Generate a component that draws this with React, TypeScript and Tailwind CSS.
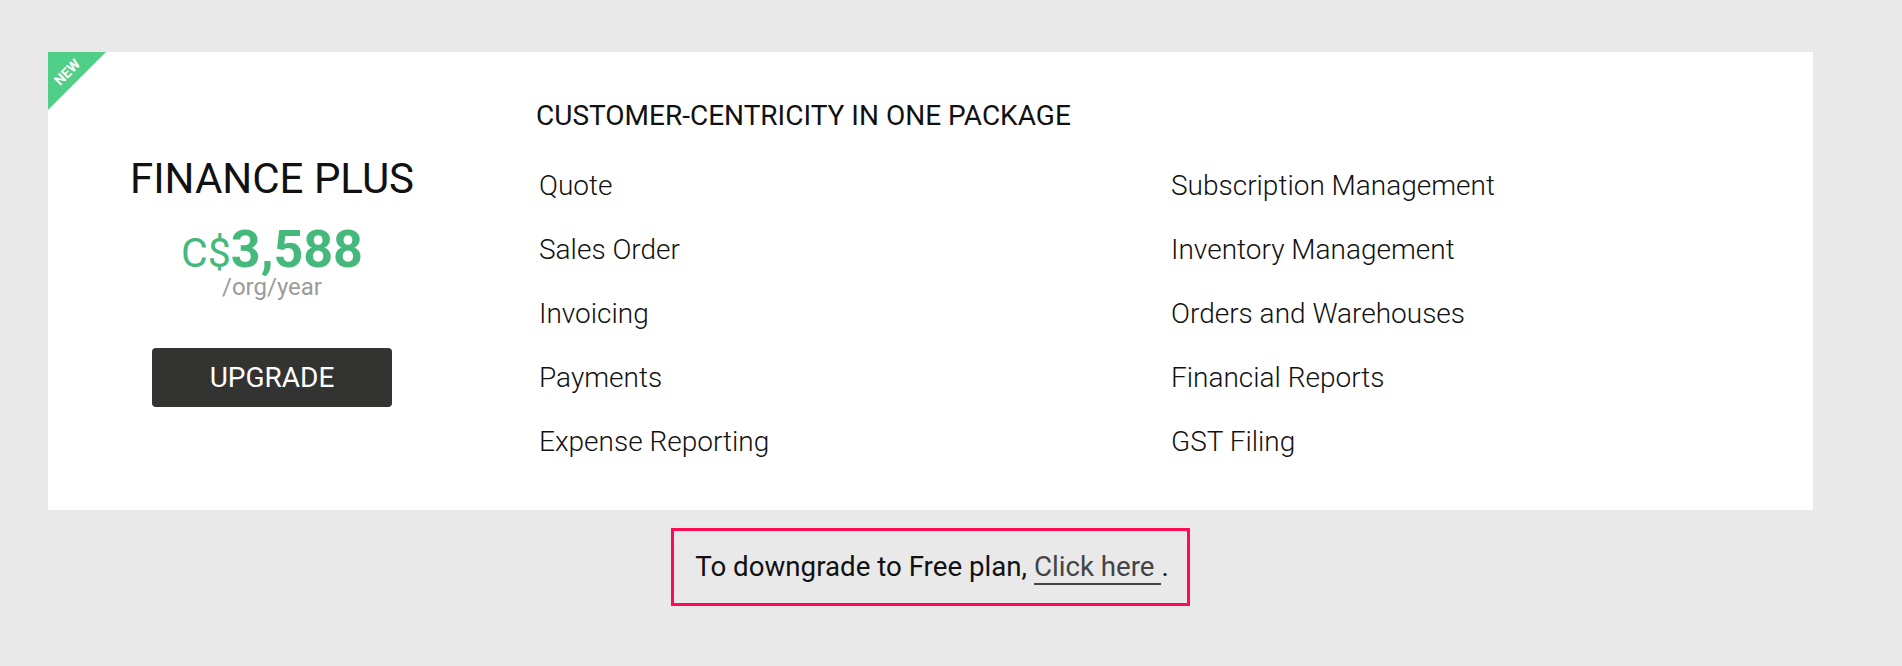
const leftFeatures = ["Quote", "Sales Order", "Invoicing", "Payments", "Expense Reporting"];
const rightFeatures = [
  "Subscription Management",
  "Inventory Management",
  "Orders and Warehouses",
  "Financial Reports",
  "GST Filing",
];

function FeatureList({ items }: { items: string[] }) {
  return (
    <ul>
      {items.map((item) => (
        <li key={item} className="pl-[3px] text-[28px] font-light leading-[64px] text-[#111]">
          {item}
        </li>
      ))}
    </ul>
  );
}

export default function App() {
  return (
    <div className="min-h-[666px] bg-[#e9e9e9] pt-[52px] font-['Roboto',sans-serif]">
      <div className="ml-[48px] w-[1765px]">
        <div className="relative flex h-[458px] bg-white">
          {/* new ribbon */}
          <div className="absolute left-0 top-0 h-[58px] w-[58px] bg-[#4fcf88] [clip-path:polygon(0_0,100%_0,0_100%)]" />
          <span className="absolute left-[19px] top-[20px] -translate-x-1/2 -translate-y-1/2 -rotate-45 text-[14px] font-bold leading-none text-white">
            NEW
          </span>

          <div className="flex w-[448px] flex-col items-center pt-[103px]">
            <h2 className="text-[42px] leading-[48px] text-[#111]">FINANCE PLUS</h2>
            <div className="mt-[24px] flex h-[46px] items-baseline leading-[46px] text-[#45b97c]">
              <span className="text-[41px]">C$</span>
              <span className="text-[52px] font-bold">3,588</span>
            </div>
            <div className="mt-[2px] text-[24px] leading-[24px] text-[#9b9b9b]">/org/year</div>
            <button className="mt-[49px] h-[59px] w-[240px] rounded-[4px] bg-[#333332] text-[28px] text-white">
              UPGRADE
            </button>
          </div>

          <div className="pl-[40px] pt-[48px]">
            <h3 className="mb-[22px] text-[28px] leading-[32px] text-[#111]">
              CUSTOMER-CENTRICITY IN ONE PACKAGE
            </h3>
            <div className="grid grid-cols-[632px_632px]">
              <FeatureList items={leftFeatures} />
              <FeatureList items={rightFeatures} />
            </div>
          </div>
        </div>

        <div className="mt-[18px] flex justify-center">
          <div className="border-[3px] border-[#ff0a54] py-5 pl-[21px] pr-[18px] text-[27.7px] leading-[32px] text-[#111]">
            To downgrade to Free plan,{" "}
            <a href="#" className="border-b-2 border-[#444] text-[#444]">
              Click here{" "}
            </a>
            .
          </div>
        </div>
      </div>
    </div>
  );
}
